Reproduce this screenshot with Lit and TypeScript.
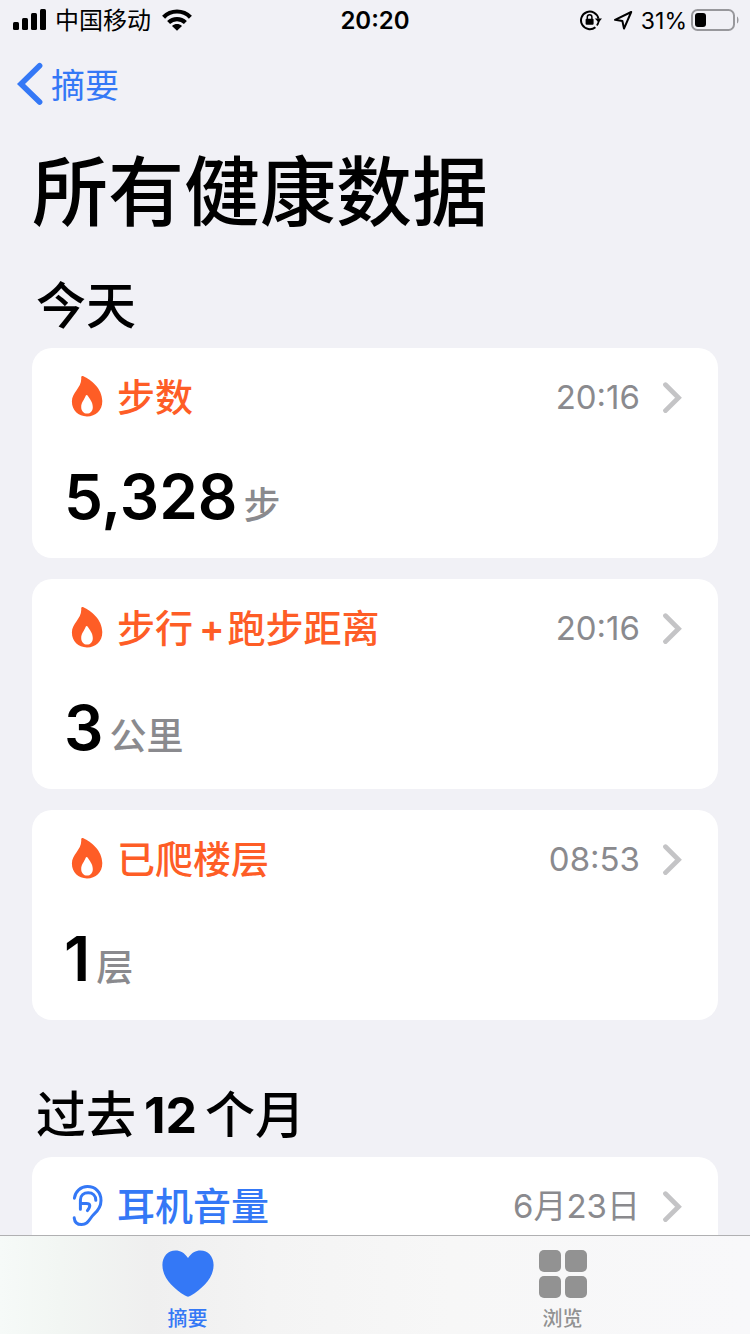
import { LitElement, html, css, svg } from "lit";
import { customElement, property } from "lit/decorators.js";
import { classMap } from "lit/directives/class-map.js";

interface Metric {
  icon: "flame" | "ear";
  title: unknown;
  time: string;
  value: string;
  unit: string;
}

const flame = svg`<path fill-rule="evenodd" d="M10.200 1.400C10.300.2 11.300-.3 12.400.2C20 3.400 31.300 12.500 31.300 25C31.300 34.600 24.800 40.400 16 40.400C7.200 40.400 .9 34.400 .9 25.600C.9 16 11.200 11.500 10.200 1.400ZM16.600 19.600C16 18.700 15 18.800 14.700 19.800C13.600 23.400 10.200 26.400 10.200 31C10.200 35 12.700 37.600 16 37.600C19.500 37.600 21.800 35 21.800 31C21.800 26.200 18.600 23 16.600 19.600Z" fill="currentColor"/>`;

const ear = svg`<g fill="none" stroke="currentColor" stroke-width="3" stroke-linecap="round" stroke-linejoin="round">
  <path d="M3.400 13.200C4.200 6.200 9.700 1.600 16.400 1.600C24.200 1.600 30 7 30 15.400C30 21.600 26.600 26 22.800 29.400C18.400 33.400 17.600 39.600 10.600 39.600C6.200 39.600 3.600 37 3.200 32.800"/>
  <path d="M9.400 24.200V15C9.400 10.400 12.800 7.800 17.200 7.800C21.800 7.800 24.800 10.600 24.800 15.200"/>
  <path d="M9.400 18.400H15.400C19.600 18.400 19.800 21.200 16.400 25.600"/>
</g>`;

@customElement("metric-card")
export class MetricCard extends LitElement {
  @property({ attribute: false }) metric!: Metric;

  static styles = css`
    :host {
      display: block;
    }
    .card {
      display: flex;
      flex-direction: column;
      justify-content: space-between;
      box-sizing: border-box;
      min-height: 210px;
      padding: 24px 36px 12px 32px;
      border-radius: 20px;
      background: #fff;
      color: #000;
      text-decoration: none;
    }
    .head {
      display: flex;
      align-items: center;
      height: 50px;
    }
    .icon {
      flex: none;
      width: 32px;
      height: 42px;
      margin-left: 7px;
    }
    .title {
      flex: 1;
      margin: 0 0 0 14px;
      font-size: 38px;
      line-height: 50px;
      font-weight: 500;
    }
    .plus {
      margin: 0 3px 0 6px;
      font-weight: 600;
    }
    .flame {
      color: #fe5d26;
    }
    .ear {
      color: #3478f6;
    }
    .time {
      color: #8a8a8e;
      font-size: 33px;
      line-height: 50px;
    }
    .chevron {
      flex: none;
      width: 20px;
      height: 32px;
      margin-left: 22px;
    }
    .reading {
      display: flex;
      align-items: baseline;
      gap: 6px;
      margin: 0;
      line-height: 80px;
    }
    .value {
      font-size: 62px;
      font-weight: 600;
    }
    .unit {
      color: #8a8a8e;
      font-size: 37px;
      font-weight: 500;
    }
  `;

  render() {
    const m = this.metric;
    const tone = { flame: m.icon === "flame", ear: m.icon === "ear" };
    return html`
      <a class="card" href="#">
        <div class="head">
          <svg class=${classMap({ icon: true, ...tone })} viewBox="0 0 32 42" aria-hidden="true">
            ${m.icon === "flame" ? flame : ear}
          </svg>
          <h3 class=${classMap({ title: true, ...tone })}>${m.title}</h3>
          <span class="time">${m.time}</span>
          <svg class="chevron" viewBox="0 0 20 32" aria-hidden="true">
            <path d="M3.500 3.800L16.500 16.800L3.500 29.600" fill="none" stroke="#c4c4c6" stroke-width="4.800" stroke-linecap="round" stroke-linejoin="miter" />
          </svg>
        </div>
        <p class="reading">
          <span class="value">${m.value}</span><span class="unit">${m.unit}</span>
        </p>
      </a>
    `;
  }
}

@customElement("app-root")
export class AppRoot extends LitElement {
  private today: Metric[] = [
    { icon: "flame", title: "步数", time: "20:16", value: "5,328", unit: "步" },
    {
      icon: "flame",
      title: html`步行<span class="plus">+</span>跑步距离`,
      time: "20:16",
      value: "3",
      unit: "公里",
    },
    { icon: "flame", title: "已爬楼层", time: "08:53", value: "1", unit: "层" },
  ];

  private year: Metric[] = [
    { icon: "ear", title: "耳机音量", time: "6月23日", value: "", unit: "" },
  ];

  static styles = css`
    :host {
      display: flex;
      flex-direction: column;
      height: 100vh;
      overflow: hidden;
      background: #f1f1f6;
      color: #000;
      font-family: Inter, "Noto Sans CJK SC", sans-serif;
    }
    .status {
      display: grid;
      grid-template-columns: 1fr auto 1fr;
      align-items: center;
      height: 40px;
      padding: 0 11px;
      font-size: 24px;
      line-height: 38px;
    }
    .side {
      display: flex;
      align-items: center;
    }
    .end {
      justify-content: flex-end;
    }
    .label {
      padding-top: 2px;
    }
    .bars {
      width: 33px;
      height: 22px;
      margin: 0 9px 0 2px;
    }
    .wifi {
      width: 30px;
      height: 22px;
      margin-left: 11px;
    }
    .clock {
      font-weight: 600;
    }
    .percent {
      font-size: 23px;
    }
    .lock {
      width: 22px;
      height: 22px;
    }
    .arrow {
      width: 20px;
      height: 20px;
      margin: 0 8px 0 11px;
    }
    .battery {
      width: 48px;
      height: 24px;
      margin-left: 4px;
    }
    .nav {
      display: flex;
      height: 88px;
      padding-left: 16px;
    }
    .back {
      display: flex;
      align-items: center;
      gap: 8px;
      color: #3478f6;
      font-size: 34px;
      text-decoration: none;
    }
    .back-label {
      padding-bottom: 2px;
    }
    .back-icon {
      width: 27px;
      height: 44px;
    }
    .content {
      flex: 1;
      min-height: 0;
      overflow-y: auto;
      scrollbar-width: none;
      padding: 0 32px;
    }
    .page-title {
      margin: 0;
      font-size: 76px;
      line-height: 128px;
      font-weight: 500;
    }
    .section-title {
      margin: 0;
      padding: 8px 0 0 4px;
      font-size: 50px;
      line-height: 84px;
      font-weight: 500;
    }
    .number {
      margin: 0 8px;
      font-weight: 700;
    }
    .cards {
      display: grid;
      gap: 21px;
      margin-bottom: 45px;
    }
    .tabs {
      display: grid;
      grid-template-columns: 1fr 1fr;
      flex: none;
      height: 98px;
      border-top: 1px solid #b0b0b2;
      background: linear-gradient(90deg, #f6faf8 0%, #f2f6f3 8%, #efefef 20%, #f4f4f4 36%, #f7f7f7 60%, #f8f8fa 100%);
    }
    .tab {
      display: flex;
      flex-direction: column;
      align-items: center;
      padding: 14px 0 0;
      border: 0;
      background: none;
      color: #929292;
      font-family: inherit;
      font-size: 20px;
      line-height: 28px;
      font-weight: 500;
      gap: 7px;
    }
    .active {
      color: #3478f6;
    }
    .tab-icon {
      width: 52px;
      height: 48px;
    }
  `;

  render() {
    return html`
      <header class="status">
        <div class="side">
          <svg class="bars" viewBox="0 0 33 22" aria-hidden="true">
            <rect x="0" y="13" width="6" height="8" rx="1.500" />
            <rect x="9" y="9" width="6" height="12" rx="1.500" />
            <rect x="18" y="4" width="6" height="17" rx="1.500" />
            <rect x="27" y="0" width="6" height="21" rx="1.500" />
          </svg>
          <span class="label">中国移动</span>
          <svg class="wifi" viewBox="0 0 30 22" aria-hidden="true">
            <g fill="none" stroke="#000" stroke-width="4.200">
              <path d="M1.600 8.200C9 .6 21 .6 28.400 8.200" />
              <path d="M6.600 13.600C11.300 8.900 18.700 8.900 23.400 13.600" />
            </g>
            <path d="M10 16.900C13 14.400 17 14.400 20 16.900L15 21.800Z" />
          </svg>
        </div>
        <time class="label clock">20:20</time>
        <div class="side end">
          <svg class="lock" viewBox="0 0 22 22" aria-hidden="true">
            <path d="M15.400 18.200A8.800 8.800 0 1 1 18.400 9.400" fill="none" stroke="#000" stroke-width="2" />
            <path d="M18.600 9.600A8.800 8.800 0 0 1 16.800 16.600" fill="none" stroke="#000" stroke-width="1.600" />
            <path d="M14.800 9.400H22L18.600 13.600Z" />
            <rect x="5.600" y="9.800" width="8" height="6" rx="1" />
            <path d="M7.300 10V8A2.300 2.300 0 0 1 11.900 8V10" fill="none" stroke="#000" stroke-width="1.500" />
          </svg>
          <svg class="arrow" viewBox="0 0 20 20" aria-hidden="true">
            <path d="M18.200 2L2 9.800L9.400 11L11 18.600Z" fill="none" stroke="#000" stroke-width="2" stroke-linejoin="round" />
          </svg>
          <span class="label percent">31%</span>
          <svg class="battery" viewBox="0 0 48 24" aria-hidden="true">
            <rect x="1" y="2" width="42" height="20" rx="5.500" fill="none" stroke="#98989c" stroke-width="2" />
            <rect x="4" y="5" width="11" height="14" rx="3" />
            <path d="M46 8.500C48 9.500 48 14.500 46 15.500Z" fill="#98989c" />
          </svg>
        </div>
      </header>
      <nav class="nav">
        <a class="back" href="#">
          <svg class="back-icon" viewBox="0 0 27 44" aria-hidden="true">
            <path d="M23.600 3.800L5 22L23.600 40" fill="none" stroke="currentColor" stroke-width="5.600" stroke-linecap="round" stroke-linejoin="miter" />
          </svg>
          <span class="back-label">摘要</span>
        </a>
      </nav>
      <main class="content">
        <h1 class="page-title">所有健康数据</h1>
        <section>
          <h2 class="section-title">今天</h2>
          <div class="cards">${this.today.map((m) => html`<metric-card .metric=${m}></metric-card>`)}</div>
        </section>
        <section>
          <h2 class="section-title">过去<span class="number">12</span>个月</h2>
          <div class="cards">${this.year.map((m) => html`<metric-card .metric=${m}></metric-card>`)}</div>
        </section>
      </main>
      <footer class="tabs">
        <button class="tab active" type="button">
          <svg class="tab-icon" viewBox="0 0 52 48" aria-hidden="true">
            <path d="M26 8C22.600 2.600 18.200 .4 13.600 .4C5.900 .4 .4 6.400 .4 15C.4 28 11.500 38.500 23 45.600C25.300 47 26.700 47 29 45.600C40.500 38.500 51.600 28 51.600 15C51.600 6.400 46.100 .4 38.400 .4C33.800 .4 29.400 2.600 26 8Z" fill="currentColor" />
          </svg>
          <span>摘要</span>
        </button>
        <button class="tab" type="button">
          <svg class="tab-icon" viewBox="0 0 52 48" fill="currentColor" aria-hidden="true">
            <rect x="2" y="0" width="22" height="22" rx="5" />
            <rect x="28" y="0" width="22" height="22" rx="5" />
            <rect x="2" y="26" width="22" height="22" rx="5" />
            <rect x="28" y="26" width="22" height="22" rx="5" />
          </svg>
          <span>浏览</span>
        </button>
      </footer>
    `;
  }
}
